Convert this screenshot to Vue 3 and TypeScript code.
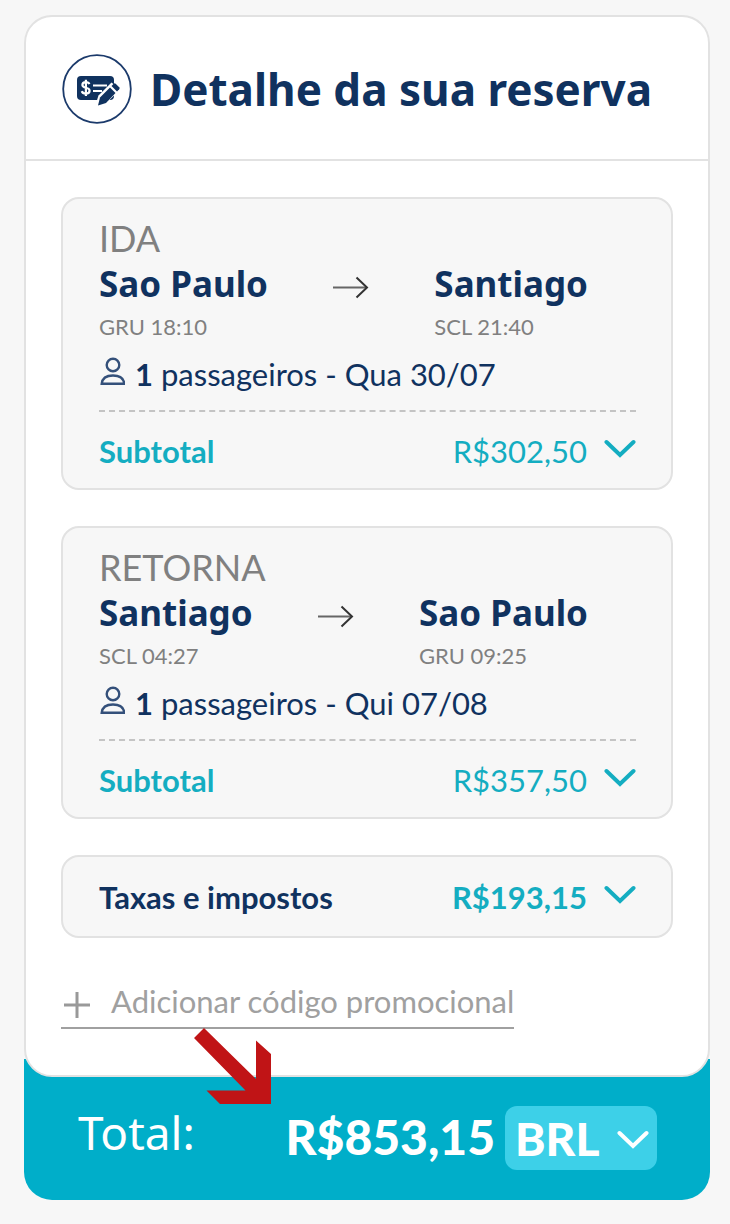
<script setup lang="ts">
import { ref } from 'vue'

interface Stop {
  city: string
  code: string
  time: string
}

interface Trip {
  label: string
  from: Stop
  to: Stop
  passengers: number
  date: string
  subtotal: string
}

const trips: Trip[] = [
  {
    label: 'IDA',
    from: { city: 'Sao Paulo', code: 'GRU', time: '18:10' },
    to: { city: 'Santiago', code: 'SCL', time: '21:40' },
    passengers: 1,
    date: 'Qua 30/07',
    subtotal: 'R$302,50',
  },
  {
    label: 'RETORNA',
    from: { city: 'Santiago', code: 'SCL', time: '04:27' },
    to: { city: 'Sao Paulo', code: 'GRU', time: '09:25' },
    passengers: 1,
    date: 'Qui 07/08',
    subtotal: 'R$357,50',
  },
]

const taxes = 'R$193,15'
const total = 'R$853,15'
const currency = ref('BRL')
</script>

<template>
  <main class="page">
    <section class="card" aria-labelledby="booking-title">
      <header class="card-header">
        <svg class="badge" viewBox="0 0 70 70" aria-hidden="true">
          <circle cx="35" cy="35" r="33.8" fill="#fff" stroke="#1b3a6b" stroke-width="1.8" />
          <rect x="15" y="22" width="37" height="24" rx="4" fill="#10325f" />
          <path d="M27.4 30.2c-.6-1.5-2-2-3.6-2-2 0-3.4 1-3.4 2.7 0 3.9 7.2 1.8 7.2 5.8 0 1.9-1.7 2.9-3.8 2.9-2 0-3.5-.8-4-2.5M23.9 25.8v16.2" fill="none" stroke="#fff" stroke-width="2.2" />
          <path d="M31 31.5h14M31 37h9" fill="none" stroke="#fff" stroke-width="2.2" />
          <path d="M33.500 51l3-9.500L49.500 28.500l8.500 7-12.500 12.500z" fill="#fff" />
          <path d="M36 51.500l2-8L48 33.500l5.500 5.500L44 49z" fill="#10325f" />
          <path d="M49.500 32l2.200-2.200q1-1 2 0l3.500 3.500q1 1 0 2L55 37.500z" fill="#10325f" />
        </svg>
        <h1 id="booking-title" class="title">Detalhe da sua reserva</h1>
      </header>

      <div class="card-body">
        <article v-for="trip in trips" :key="trip.label" class="panel trip">
          <h2 class="trip-label">{{ trip.label }}</h2>
          <div class="route">
            <div>
              <div class="city">{{ trip.from.city }}</div>
              <div class="code">{{ trip.from.code }} {{ trip.from.time }}</div>
            </div>
            <svg class="arrow" viewBox="0 0 36 24" aria-hidden="true">
              <path d="M0 12.500h34" fill="none" stroke="#666" stroke-width="2" />
              <path d="M23.500 2.500l10.500 10-10.500 10" fill="none" stroke="#333" stroke-width="2" />
            </svg>
            <div>
              <div class="city">{{ trip.to.city }}</div>
              <div class="code">{{ trip.to.code }} {{ trip.to.time }}</div>
            </div>
          </div>
          <p class="passengers">
            <svg class="person" viewBox="0 0 26 30" aria-hidden="true">
              <circle cx="14" cy="9" r="6.3" />
              <path d="M2.700 27.800c.6-5.600 5-8.300 11.300-8.300s10.700 2.700 11.300 8.300z" />
            </svg>
            <span><b>{{ trip.passengers }}</b> passageiros - {{ trip.date }}</span>
          </p>
          <button type="button" class="row subtotal" aria-expanded="false">
            <span class="row-name">Subtotal</span>
            <span>{{ trip.subtotal }}</span>
            <svg class="chevron" viewBox="0 0 32 20" aria-hidden="true"><path d="M2.500 3L16 16 29.500 3" /></svg>
          </button>
        </article>

        <button type="button" class="panel row taxes" aria-expanded="false">
          <span class="row-name">Taxas e impostos</span>
          <span class="tax-value">{{ taxes }}</span>
          <svg class="chevron" viewBox="0 0 32 20" aria-hidden="true"><path d="M2.500 3L16 16 29.500 3" /></svg>
        </button>

        <button type="button" class="promo">
          <svg class="plus" viewBox="0 0 28 28" aria-hidden="true"><path d="M1 14h26M14 1v26" /></svg>
          <span>Adicionar código promocional</span>
        </button>
      </div>
    </section>

    <footer class="total">
      <svg class="pointer" viewBox="0 0 78 78" aria-hidden="true">
        <path d="M10 0L62 51V12.500L77 26V76H26L12.500 62.500H51.500L0 10z" fill="#c01416" />
      </svg>
      <span class="total-label">Total:</span>
      <strong class="total-value">{{ total }}</strong>
      <span class="currency">
        <select v-model="currency" aria-label="Moeda">
          <option>BRL</option>
          <option>USD</option>
        </select>
        <svg class="chevron" viewBox="0 0 32 20" aria-hidden="true"><path d="M2.500 3L16 16 29.500 3" /></svg>
      </span>
    </footer>
  </main>
</template>

<style>
body {
  background: #f7f7f7;
}
</style>

<style scoped>
.page {
  box-sizing: border-box;
  min-height: 100vh;
  padding: 15px 20px 24px 24px;
  background: #f7f7f7;
  color: #10325f;
  font-family: Lato, "Liberation Sans", sans-serif;
  font-size: 31px;
  line-height: 36px;
}

h1,
h2,
p {
  margin: 0;
}

button {
  border: 0;
  margin: 0;
  padding: 0;
  background: none;
  color: inherit;
  font: inherit;
  text-align: left;
  cursor: pointer;
}

.card {
  position: relative;
  z-index: 1;
  border: 2px solid #e2e2e2;
  border-radius: 28px;
  background: #fff;
}

.card-header {
  display: flex;
  align-items: center;
  gap: 18px;
  padding: 37px 36px 35px;
  border-bottom: 2px solid #e2e2e2;
}

.badge {
  flex: none;
  width: 70px;
  height: 70px;
}

.title {
  font-family: "Noto Sans", sans-serif;
  font-size: 44px;
  line-height: 70px;
  font-weight: 700;
  white-space: nowrap;
}

.card-body {
  display: flex;
  flex-direction: column;
  gap: 36px;
  padding: 36px 35px 46px;
}

.panel {
  box-sizing: border-box;
  border: 2px solid #e2e2e2;
  border-radius: 18px;
  background: #f7f7f7;
  padding: 20px 35px 19px 36px;
}

.trip-label {
  padding-bottom: 2px;
  color: #808080;
  font-size: 36px;
  line-height: 38px;
  font-weight: 400;
}

.route {
  display: flex;
  justify-content: space-between;
  align-items: flex-start;
  padding-right: 48px;
}

.city {
  font-family: "Noto Sans", sans-serif;
  font-size: 35px;
  line-height: 50px;
  font-weight: 700;
}

.code {
  color: #808080;
  font-size: 22px;
  line-height: 36px;
}

.arrow {
  width: 36px;
  height: 24px;
  margin-top: 16px;
}

.passengers {
  display: flex;
  align-items: flex-start;
  gap: 10px;
  padding: 11px 0 18px;
  border-bottom: 2px dashed #c4c4c4;
}

.person {
  width: 26px;
  height: 30px;
  fill: none;
  stroke: #34507a;
  stroke-width: 2.4;
}

.row {
  display: flex;
  align-items: center;
  width: 100%;
}

.row-name {
  flex: 1;
  font-weight: 700;
}

.subtotal {
  padding-top: 21px;
  color: #14adc1;
}

.taxes {
  padding-top: 22px;
  padding-bottom: 21px;
}

.chevron {
  width: 32px;
  height: 20px;
  margin: 0 0 4px 17px;
  fill: none;
  stroke: #14adc1;
  stroke-width: 4;
  stroke-linecap: round;
}

.tax-value {
  color: #14adc1;
  font-weight: 700;
}

.promo {
  display: flex;
  align-items: flex-end;
  align-self: flex-start;
  gap: 20px;
  margin-top: 9px;
  padding-bottom: 8px;
  border-bottom: 2px solid #a0a0a0;
  color: #a0a0a0;
}

.plus {
  width: 28px;
  height: 28px;
  margin-left: 2px;
  stroke: #999;
  stroke-width: 3;
}

.total {
  position: relative;
  display: flex;
  align-items: flex-start;
  margin-top: -18px;
  padding: 47px 53px 30px 54px;
  border-radius: 0 0 28px 28px;
  background: #00aec9;
  color: #fff;
}

.total-label {
  flex: 1;
  font-family: "Noto Sans", sans-serif;
  font-size: 46px;
  line-height: 52px;
}

.total-value {
  font-size: 48px;
  line-height: 62px;
  font-weight: 900;
  margin-right: 10px;
}

.pointer {
  position: absolute;
  z-index: 2;
  top: -31px;
  left: 170px;
  width: 78px;
  height: 78px;
}

.currency {
  display: grid;
  align-items: center;
}

.currency select {
  grid-area: 1 / 1;
  height: 64px;
  width: 152px;
  padding: 0 10px;
  border: 0;
  border-radius: 12px;
  appearance: none;
  background: #3dd0e8;
  color: #fff;
  font-family: Lato, sans-serif;
  font-size: 46px;
  font-weight: 900;
}

.currency .chevron {
  grid-area: 1 / 1;
  justify-self: end;
  margin: 4px 8px 0 0;
  stroke: #fff;
  pointer-events: none;
}
</style>
